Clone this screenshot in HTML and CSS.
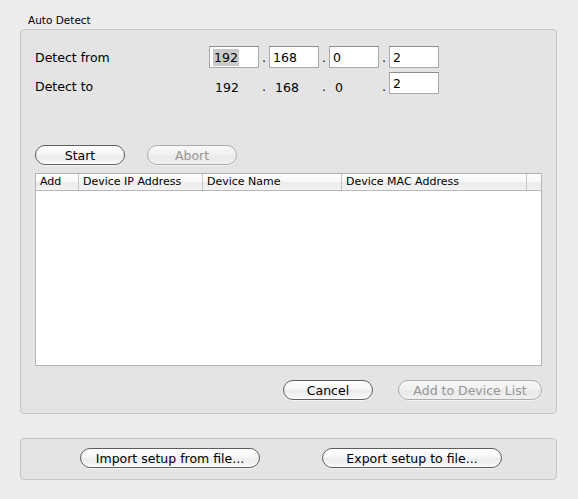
FILE: index.html
```html
<!DOCTYPE html>
<html>
<head>
<meta charset="utf-8">
<link rel="stylesheet" href="styles.css">
</head>
<body>
<div class="window">
  <div class="group-title">Auto Detect</div>
  <div class="group">
    <div class="ip-row">
      <div class="ip-label">Detect from</div>
      <div class="field"><span class="sel">192</span></div><span class="dot">.</span>
      <div class="field">168</div><span class="dot">.</span>
      <div class="field">0</div><span class="dot">.</span>
      <div class="field">2</div>
    </div>
    <div class="ip-row row2">
      <div class="ip-label">Detect to</div>
      <div class="field plain">192</div><span class="dot">.</span>
      <div class="field plain">168</div><span class="dot">.</span>
      <div class="field plain">0</div><span class="dot">.</span>
      <div class="field">2</div>
    </div>
    <div class="btn-row">
      <button class="btn w90">Start</button>
      <button class="btn w90 disabled">Abort</button>
    </div>
    <div class="table">
      <div class="thead">
        <div class="th c-add">Add</div>
        <div class="th c-ip">Device IP Address</div>
        <div class="th c-name">Device Name</div>
        <div class="th c-mac">Device MAC Address</div>
        <div class="th c-end"></div>
      </div>
      <div class="tbody"></div>
    </div>
    <div class="bottom-row">
      <button class="btn w90">Cancel</button>
      <button class="btn w144 disabled">Add to Device List</button>
    </div>
  </div>
  <div class="group2">
    <button class="btn w180">Import setup from file...</button>
    <button class="btn w180">Export setup to file...</button>
  </div>
</div>
</body>
</html>
```
FILE: styles.css
```css
* { box-sizing: border-box; }
html, body {
  margin: 0;
  padding: 0;
  background: #ededed;
}
body {
  font-family: "DejaVu Sans", "Noto Sans", sans-serif;
  color: #000;
  width: 578px;
  height: 499px;
  overflow: hidden;
}
.window {
  display: flex;
  flex-direction: column;
  padding-top: 13px;
}
.group-title {
  font-size: 10.5px;
  line-height: 14px;
  height: 16px;
  padding-left: 28px;
}
.group {
  margin-left: 20px;
  width: 537px;
  height: 385px;
  border: 1px solid #c6c6c6;
  border-radius: 4px;
  background: #e4e4e4;
  padding: 16px 14px 0 14px;
  display: flex;
  flex-direction: column;
}
.ip-row {
  display: flex;
  align-items: center;
  height: 22px;
  font-size: 12.5px;
}
.ip-row.row2 {
  margin-top: 4px;
}
.ip-label {
  width: 174px;
}
.row2 .ip-label,
.row2 .dot {
  padding-top: 7px;
}
.field {
  width: 50px;
  height: 22px;
  background: #fff;
  border: 1px solid #a9a9a9;
  border-top-color: #8e8e8e;
  padding: 2px 0 0 3px;
  line-height: 17px;
  font-size: 12.5px;
}
.field.plain {
  background: transparent;
  border-color: transparent;
  padding: 6px 0 0 5px;
}
.sel {
  background: #cacaca;
  padding: 0 1px;
  display: inline-block;
  line-height: 17px;
  width: 26px;
}
.dot {
  width: 10px;
  padding-left: 3px;
  font-size: 12.5px;
}
.btn {
  height: 20px;
  border: 1px solid #5e5e5e;
  border-radius: 10px;
  background: linear-gradient(#ffffff 0%, #f6f6f6 45%, #ececec 55%, #f4f4f4 85%, #ffffff 100%);
  box-shadow: 0 1px 0 rgba(255,255,255,0.6);
  font-family: "DejaVu Sans", "Noto Sans", sans-serif;
  font-size: 12.5px;
  color: #000;
  padding: 0;
  line-height: 17px;
}
.btn.disabled {
  border-color: #acacac;
  color: #959595;
  background: linear-gradient(#f8f8f8 0%, #f0f0f0 50%, #e9e9e9 55%, #f0f0f0 100%);
}
.w90 { width: 90px; }
.w144 { width: 144px; }
.w180 { width: 180px; }
.btn-row {
  margin-top: 51px;
  display: flex;
  gap: 22px;
}
.table {
  margin-top: 8px;
  width: 507px;
  height: 193px;
  border: 1px solid #b4b4b4;
  background: #fff;
  display: flex;
  flex-direction: column;
}
.thead {
  display: flex;
  height: 17px;
  border-bottom: 1px solid #b8b8b8;
  background: linear-gradient(#ffffff 0%, #f7f7f7 50%, #ececec 51%, #f2f2f2 100%);
  font-size: 11px;
  line-height: 16px;
}
.th {
  border-right: 1px solid #c4c4c4;
  padding-left: 4px;
  white-space: nowrap;
  overflow: hidden;
}
.c-add { width: 43px; }
.c-ip { width: 124px; }
.c-name { width: 139px; }
.c-mac { width: 185px; }
.c-end { flex: 1; border-right: none; }
.tbody { flex: 1; }
.bottom-row {
  margin-top: 14px;
  display: flex;
  justify-content: flex-end;
  gap: 25px;
}
.group2 {
  margin-top: 24px;
  margin-left: 20px;
  width: 537px;
  height: 42px;
  border: 1px solid #c6c6c6;
  border-radius: 4px;
  background: #e4e4e4;
  display: flex;
  align-items: flex-start;
  padding: 9px 0 0 59px;
  gap: 62px;
}
```
